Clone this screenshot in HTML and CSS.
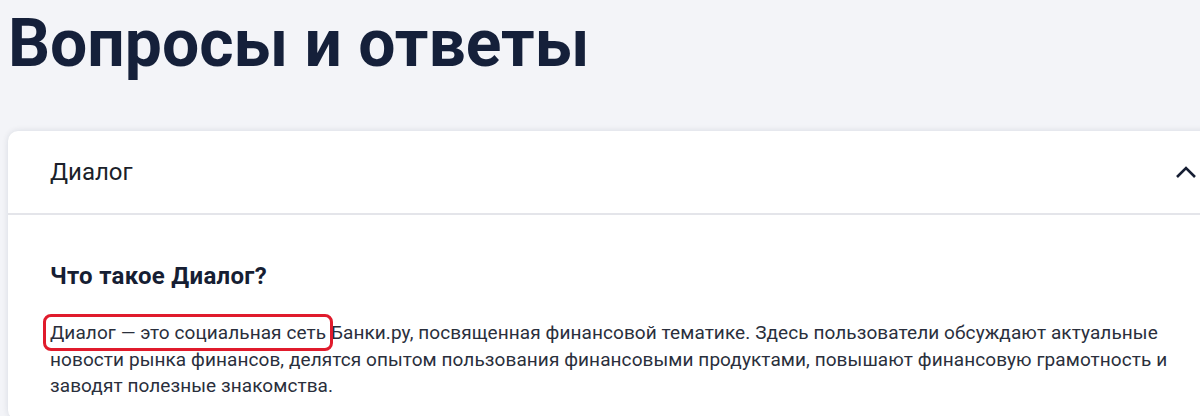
FILE: index.html
```html
<!DOCTYPE html>
<html lang="ru">
<head>
<meta charset="utf-8">
<link rel="stylesheet" href="styles.css">
</head>
<body>
<main class="page">
  <h1 class="title">Вопросы и ответы</h1>
  <section class="card">
    <div class="card-head">
      <span class="card-title">Диалог</span>
      <svg class="chevron" width="22" height="14" viewBox="0 0 22 14"><path d="M2 12 L11 3 L20 12" fill="none" stroke="#161e33" stroke-width="2.6"/></svg>
    </div>
    <div class="card-body">
      <h2 class="q">Что такое Диалог?</h2>
      <p class="a"><span class="mark">Диалог — это социальная сеть</span> Банки.ру, посвященная финансовой тематике. Здесь пользователи обсуждают актуальные новости рынка финансов, делятся опытом пользования финансовыми продуктами, повышают финансовую грамотность и заводят полезные знакомства.</p>
    </div>
  </section>
</main>
</body>
</html>
```
FILE: styles.css
```css
html, body {
  margin: 0;
  padding: 0;
  background: #f3f4f8;
  overflow: hidden;
}
.page {
  padding: 0 0 0 8px;
  font-family: Roboto, "Noto Sans", sans-serif;
  color: #161e33;
}
.title {
  margin: 0;
  padding-top: 5px;
  font-size: 66px;
  line-height: 77px;
  font-weight: 700;
  color: #15203a;
}
.card {
  margin-top: 49px;
  width: 1220px;
  background: #fff;
  border-radius: 10px;
  box-shadow: 0 0 6px rgba(20, 30, 60, 0.12);
}
.card-head {
  height: 82px;
  border-bottom: 2px solid #e4e5ea;
  display: flex;
  align-items: center;
  padding-left: 42px;
}
.card-title {
  font-size: 24px;
  color: #1b1f2a;
  flex: 1;
}
.chevron {
  margin-right: 31px;
}
.card-body {
  padding: 46px 42px 20px;
}
.q {
  margin: 0;
  font-size: 24px;
  line-height: 30px;
  font-weight: 700;
  letter-spacing: 0.3px;
  color: #161e33;
}
.a {
  margin: 29px 0 0;
  font-size: 19px;
  line-height: 26.5px;
  letter-spacing: 0.08px;
  color: #2a2f3c;
  width: 1128px;
}
.mark {
  outline: 3px solid #e01b2c;
  outline-offset: 4px;
  border-radius: 1px;
}
```
